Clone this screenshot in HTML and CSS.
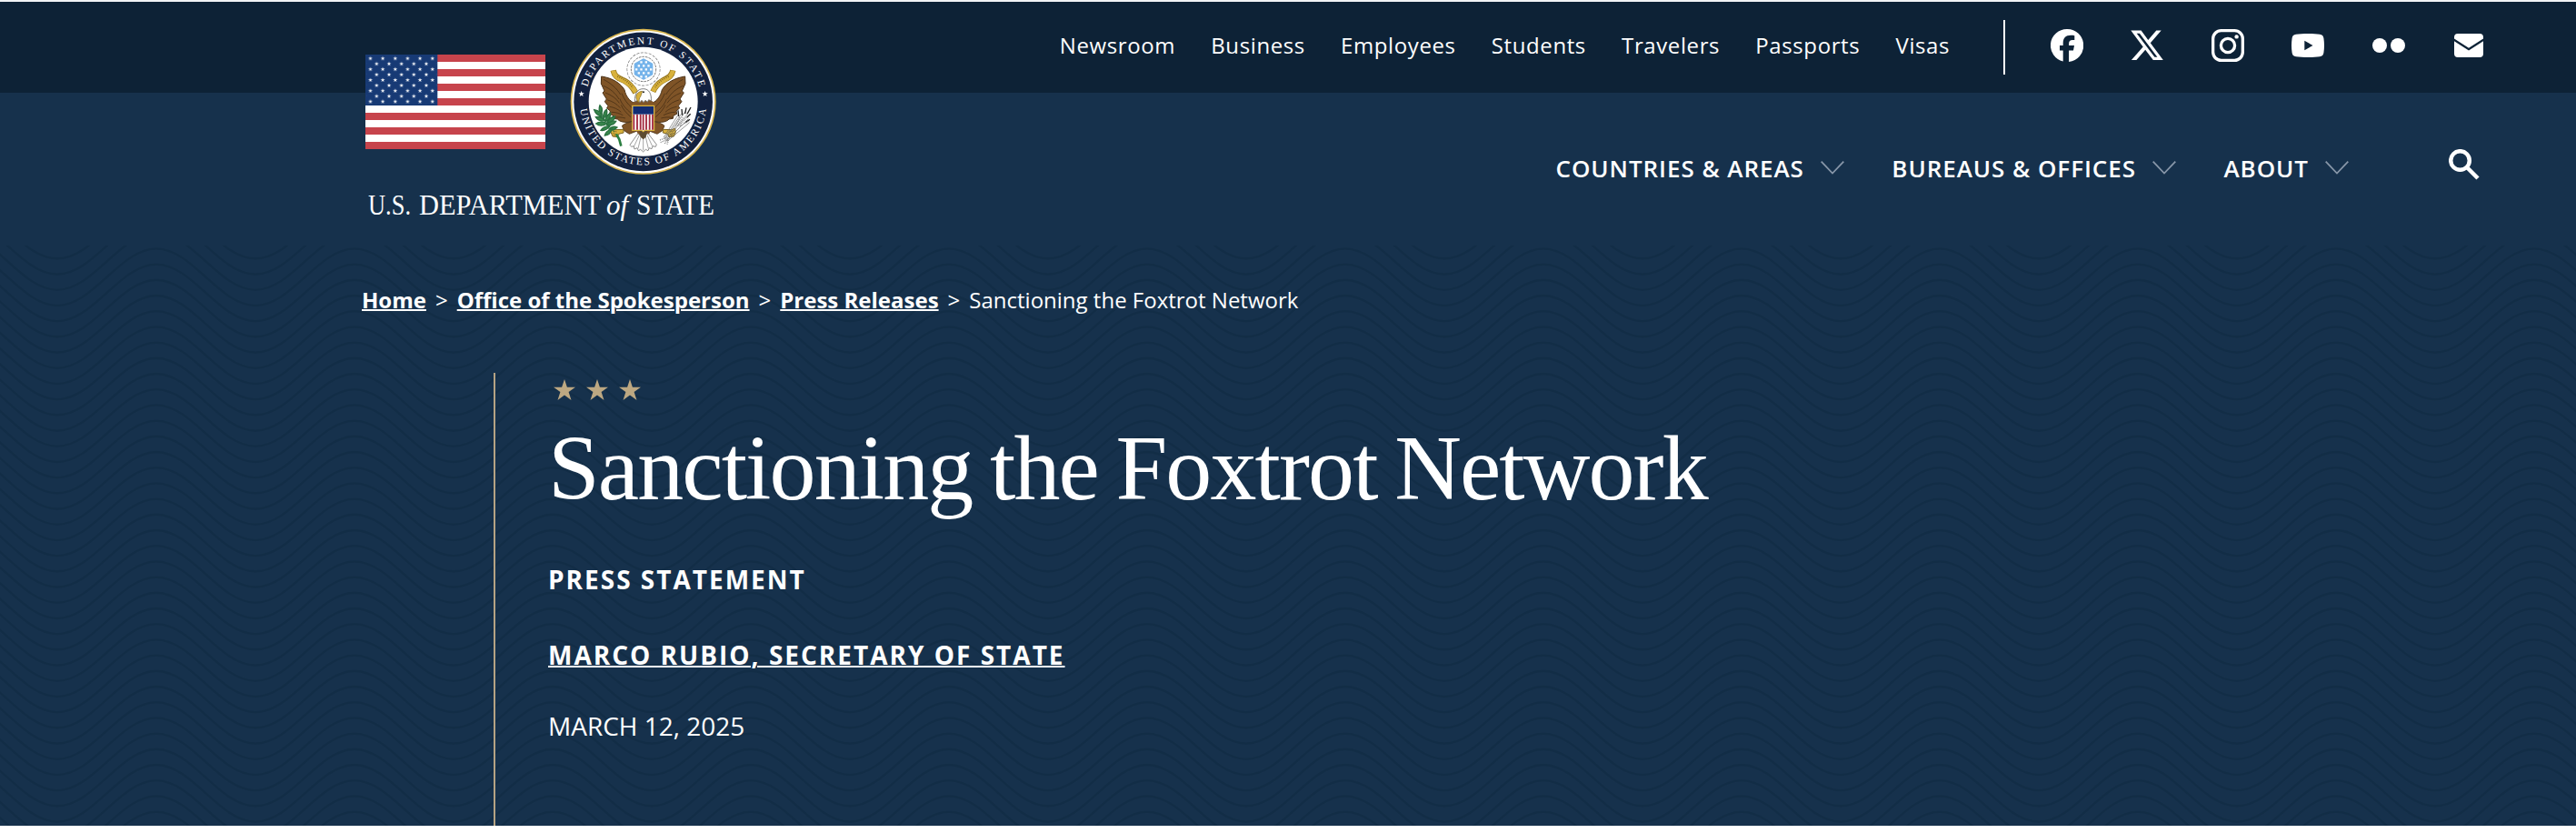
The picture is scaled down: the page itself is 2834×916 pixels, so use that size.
FILE: index.html
```
<!DOCTYPE html>
<html lang="en">
<head>
  <meta charset="UTF-8">
  <meta name="viewport" content="width=device-width, initial-scale=1.0">
  <title>Sanctioning the Foxtrot Network - United States Department of State</title>
  <link rel="stylesheet" href="styles.css">
</head>
<body>
  <header class="site-header">
    <a class="logo" href="#" aria-label="U.S. Department of State">
      <svg width="388" height="216" viewBox="402 30 388 216">
        <defs>
          <path id="star" d="M0-10 2.4-3.1 9.5-3.1 3.8 1.2 5.9 8.1 0 4-5.9 8.1-3.8 1.2-9.5-3.1-2.4-3.1z"/>
          <pattern id="stars" x="400.7" y="58.4" width="13.65" height="11.84" patternUnits="userSpaceOnUse">
            <use href="#star" fill="#fff" transform="translate(6.8 5.9) scale(.25)"/>
            <use href="#star" fill="#fff" transform="translate(0 11.8) scale(.25)"/>
            <use href="#star" fill="#fff" transform="translate(13.65 11.8) scale(.25)"/>
            <use href="#star" fill="#fff" transform="translate(0 0) scale(.25)"/>
            <use href="#star" fill="#fff" transform="translate(13.65 0) scale(.25)"/>
          </pattern>
          <path id="arc-top" d="M793 335.500a190 190 0 0 1 380 0"/>
          <path id="arc-bottom" d="M774 335.500a209 209 0 0 0 418 0"/>
        </defs>

        <!-- flag -->
        <rect x="402" y="60" width="198" height="104" fill="#fff"/>
        <path stroke="#c7444c" stroke-width="8" d="M402 64h198M402 80h198M402 96h198M402 112h198M402 128h198M402 144h198M402 160h198"/>
        <rect x="402" y="60" width="79.300" height="56" fill="#173a75"/>
        <rect x="403" y="61" width="77.300" height="54" fill="url(#stars)"/>

        <!-- seal -->
        <g transform="translate(380 0) scale(.33333)">
          <circle cx="983" cy="335.500" r="240" fill="#d9b650"/>
          <circle cx="983" cy="335.500" r="235" fill="#fff"/>
          <circle cx="983" cy="335.500" r="229" fill="#12213f"/>
          <circle cx="983" cy="335.500" r="180" fill="#fff"/>
          <g class="seal-text">
            <text textLength="500"><textPath href="#arc-top" startOffset="50%" textLength="500">DEPARTMENT OF STATE</textPath></text>
            <text textLength="608"><textPath href="#arc-bottom" startOffset="50%" textLength="608">UNITED STATES OF AMERICA</textPath></text>
          </g>
          <use href="#star" fill="#fff" transform="translate(779 310)"/>
          <use href="#star" fill="#fff" transform="translate(1187 310)"/>

          <!-- glory -->
          <g fill="none" stroke="#777">
            <circle cx="984" cy="228" r="52" stroke-width="7" stroke-dasharray="9 4"/>
            <circle cx="984" cy="228" r="50" stroke="#fff" stroke-width="7"/>
            <circle cx="984" cy="228" r="41" stroke-width="3" stroke-dasharray="8 3"/>
          </g>
          <path fill="#74b3ea" stroke="#74b3ea" stroke-width="8" stroke-linejoin="round" d="M984 197l27 15v32l-27 15-27-15v-32z"/>
          <g fill="none" stroke="#fff" stroke-width="7" stroke-dasharray="7 9">
            <path d="M973 205h30M965 217h45M957 229h60M965 241h45M973 253h30"/>
          </g>

          <!-- ribbon -->
          <path fill="none" stroke="#94751f" stroke-width="19" d="M884 232c4 22 20 26 36 34s26 18 38 40M1081 232c-4 22-20 26-34 34s-24 18-32 36"/>
          <path fill="none" stroke="#d8b13c" stroke-width="15" d="M884 233c4 22 20 26 36 34s26 18 38 37M1081 233c-4 22-20 26-34 34s-24 18-32 34"/>
          <path fill="none" stroke="#8a6d1e" stroke-width="6" stroke-dasharray="3 4" d="M898 252c20 8 40 20 50 38M1067 252c-20 8-36 20-44 36"/>

          <!-- wings and legs -->
          <g id="wing">
            <path fill="#7f5427" stroke="#4a3117" stroke-width="3" d="M845 252c38 6 62 22 76 44 5 22 16 36 32 44l-2 58c-12 6-24 6-36 4-9-2-13-5-17-9l-13-2-2-10-11-5 2-10-11-9 4-8-11-14 6-8-13-21 6-6-11-24z"/>
            <path fill="none" stroke="#3c2711" stroke-width="2" d="M852 262c26 14 44 30 56 50M851 283c24 10 40 24 52 44M858 306c20 8 36 18 46 34M865 330c16 4 30 12 42 26M872 352c14 2 28 8 38 18M878 370c14 0 26 4 38 10M886 388c12-2 24-2 38 2M912 308c8 20 18 34 34 48M906 326c6 18 20 34 38 48M910 346c6 14 18 28 32 40"/>
            <path fill="#7f5427" stroke="#4a3117" stroke-width="2.500" d="M946 402c-14 2-26 6-33 13l7 16 17 11 26-10z"/>
            <path fill="#d8b13c" stroke="#7a6120" stroke-width="3" d="M878 424l12 4 28-1v11l-16 4-4 10-16-2-6-14z"/>
            <path fill="none" stroke="#7a6120" stroke-width="2" d="M882 431l14 4M881 440l14 2M885 447l10-2"/>
          </g>
          <use href="#wing" transform="translate(1966 0) scale(-1 1)"/>

          <!-- head -->
          <path fill="#7f5427" d="M948 338l20-10h34l18 10v14h-72z"/>
          <path fill="#fff" stroke="#666" stroke-width="2.500" d="M955 335c0-26 8-42 28-42s28 18 26 40l-8-4-4 8-7-6-6 7-6-7-6 7-6-7z"/>
          <path fill="#d8b13c" stroke="#7a6120" stroke-width="2" d="M980 301c-14 1-22 10-20 23 2 8 6 11 8 15 3-8 0-15 6-20z"/>
          <circle cx="984" cy="304" r="3" fill="#222"/>

          <!-- tail -->
          <path fill="#7f5427" d="M960 430h48l-10 22h-28z"/>
          <path fill="#fff" stroke="#777" stroke-width="2.500" d="M966 440l-27 38 5 6 8-2 2 10 9-4 4 9 7-4 9 8 8-8 8 4 4-9 8 3 3-9 10 2 3-7-28-37-12 8h-14z"/>
          <path fill="none" stroke="#777" stroke-width="2" d="M970 446l-17 36M976 448l-10 42M983 448v48M990 448l10 42M996 446l17 36"/>
          <path fill="#5c4a30" d="M970 432h26l-4 20-9 8-9-8z"/>

          <!-- shield -->
          <path fill="#fff" stroke="#d8b13c" stroke-width="3.500" d="M947 349h72v81h-31l-5 4-5-4h-31z"/>
          <path stroke="#a32a3f" stroke-width="5.500" d="M952 377v51M963 377v51M974 377v51M983 377v52M993 377v51M1004 377v51M1014 377v51"/>
          <path fill="#122c72" d="M949 351h68v26h-68z"/>

          <!-- olive branch -->
          <path fill="none" stroke="#2b7e41" stroke-width="8" d="M894 442l10 18 6 22"/>
          <path fill="none" stroke="#26653a" stroke-width="3" d="M888 436c-24-22-40-48-49-88"/>
          <path fill="#37864b" stroke="#2a7040" stroke-width="4" d="M840 347c-5 12-2 22 4 29 5-10 3-22-4-29zM821 362c4 12 14 20 26 22-2-12-14-20-26-22zM826 386c6 10 18 14 30 12-6-9-18-14-30-12zM827 408c10 8 24 8 36 0-10-7-26-8-36 0zM843 430c12 2 22-4 30-14-12 0-24 4-30 14zM856 447c10 0 20-8 24-22-12 4-22 12-24 22zM862 361c-10 8-12 18-10 30 10-8 14-18 10-30zM875 373c-12 6-17 16-17 28 12-5 17-16 17-28zM893 400c-13-2-24 2-30 12 12 2 24-2 30-12zM890 384c-12 2-22 10-26 20 14 0 24-8 26-20zM897 420c-10-4-20-2-27 6 10 4 20 2 27-6z"/>

          <!-- arrows -->
          <g fill="none" stroke="#666" stroke-width="2">
            <path d="M1052 458l58-84M1054 460l68-92M1058 462l70-84M1060 464l72-72M1062 466l74-62M1050 454l50-78"/>
            <path stroke="#222" stroke-width="4" d="M1098 364l2 20M1110 360l2 20M1125 355l-4 20M1140 354l-12 22M1139 376l-12 12M1137 394l-14 10"/>
            <path stroke="#888" stroke-width="4" stroke-dasharray="3 3" d="M1104 388l-16 34M1114 388l-20 30M1126 388l-26 28M1132 400l-28 16M1038 462l28-10M1040 470l28-12M1054 474l12-18M1062 476l6-20"/>
          </g>
        </g>

        <!-- wordmark -->
        <g class="wordmark">
          <text x="405" y="235.500" textLength="47" lengthAdjust="spacingAndGlyphs">U.S.</text>
          <text x="461" y="235.500" textLength="200" lengthAdjust="spacingAndGlyphs">DEPARTMENT</text>
          <text class="wordmark-of" x="667" y="235.500" textLength="24">of</text>
          <text x="700" y="235.500" textLength="86" lengthAdjust="spacingAndGlyphs">STATE</text>
        </g>
      </svg>
    </a>

    <div class="topbar">
      <nav class="secondary-nav">
        <a href="#">Newsroom</a>
        <a href="#">Business</a>
        <a href="#">Employees</a>
        <a href="#">Students</a>
        <a href="#">Travelers</a>
        <a href="#">Passports</a>
        <a href="#">Visas</a>
      </nav>
      <div class="social">
        <a href="#" aria-label="Facebook">
          <svg viewBox="0 0 36 36"><path d="M18 0a18 18 0 0 0-4.300 35.500V23.500H10V18h3.700v-2.400c0-6 2.700-8.900 8.700-8.900 1.100 0 3.100.2 3.900.5v4.900c-.4 0-1.200-.1-2.100-.1-2.900 0-4.100 1.100-4.100 4V18h5.900l-1 5.500h-4.900v12.400A18 18 0 0 0 18 0z"/></svg>
        </a>
        <a href="#" aria-label="X">
          <svg viewBox="0 0 36 36"><path d="M28.300 1.600h5.400L21.800 15.200l14 18.800h-11l-8.600-11.200L6.400 34H.9l12.800-14.600L.3 1.600h11.300l7.700 10.300zM26.400 30.700h3L9.900 4.700H6.700z"/></svg>
        </a>
        <a href="#" aria-label="Instagram">
          <svg viewBox="0 0 36 36"><g fill="none" stroke="#fff" stroke-width="3.300"><rect x="1.650" y="1.650" width="32.700" height="32.700" rx="9"/><circle cx="18" cy="18" r="7.600"/></g><circle cx="27.600" cy="8.400" r="2.200"/></svg>
        </a>
        <a href="#" aria-label="YouTube">
          <svg viewBox="0 0 36 36"><path d="M5 5.700C12 4.700 24 4.700 31 5.700c2.700.4 4 1.700 4.400 4.300.8 5 .8 11 0 16-.4 2.600-1.700 3.900-4.400 4.300-7 1-19 1-26 0-2.700-.4-4-1.700-4.400-4.300-.8-5-.8-11 0-16C1 7.400 2.300 6.100 5 5.700zM14.300 12.800v10.400l9.200-5.200z"/></svg>
        </a>
        <a href="#" aria-label="Flickr">
          <svg viewBox="0 0 36 36"><circle cx="8" cy="18" r="8"/><circle cx="28" cy="18" r="8"/></svg>
        </a>
        <a href="#" aria-label="Email">
          <svg viewBox="0 0 36 36"><path d="M6 5h24a4 4 0 0 1 4 4v1.500L18 20.800 2 10.500V9a4 4 0 0 1 4-4zM2 13.300l16 10.200 16-10.200V27a4 4 0 0 1-4 4H6a4 4 0 0 1-4-4z"/></svg>
        </a>
      </div>
    </div>

    <nav class="main-nav">
      <a href="#">COUNTRIES &amp; AREAS</a>
      <svg class="chevron" viewBox="0 0 26 15"><path d="M.7.700 13 13.500 25.300.7"/></svg>
      <a href="#">BUREAUS &amp; OFFICES</a>
      <svg class="chevron" viewBox="0 0 26 15"><path d="M.7.700 13 13.500 25.300.7"/></svg>
      <a href="#">ABOUT</a>
      <svg class="chevron" viewBox="0 0 26 15"><path d="M.7.700 13 13.500 25.300.7"/></svg>
      <svg class="search" viewBox="0 0 34 34"><circle cx="12.500" cy="12.500" r="10.300"/><path d="M20 20l12 12"/></svg>
    </nav>
  </header>

  <main class="hero">
    <div class="breadcrumbs">
      <a href="#">Home</a><span>&gt;</span><a href="#">Office of the Spokesperson</a><span>&gt;</span><a href="#">Press Releases</a><span>&gt;</span>Sanctioning the Foxtrot Network
    </div>
    <div class="featured">
      <svg class="featured-stars" width="96" height="24" viewBox="0 0 96 24">
        <path id="gold-star" d="M12 0l2.900 8.800H24l-7.400 5.300 2.900 9L12 17.600l-7.500 5.500 2.900-9L0 8.800h9.100z"/>
        <use href="#gold-star" x="36"/>
        <use href="#gold-star" x="72"/>
      </svg>
      <h1 class="title">Sanctioning the Foxtrot Network</h1>
      <p class="doctype">PRESS STATEMENT</p>
      <p class="author"><a href="#">MARCO RUBIO, SECRETARY OF STATE</a></p>
      <p class="date">MARCH 12, 2025</p>
    </div>
  </main>
</body>
</html>
```
FILE: styles.css
```
* {
  margin: 0;
  padding: 0;
  box-sizing: border-box;
}

body {
  font-family: 'Open Sans', sans-serif;
  font-size: 24px;
  background: #fff;
  color: #fff;
  overflow: hidden;
}

a {
  color: #fff;
  text-decoration: none;
}

/* header */
.site-header {
  display: grid;
  grid-template-columns: 388px 1fr;
  grid-template-rows: 100px 168px;
  height: 270px;
  padding-left: 402px;
  border-top: 2px solid #f1f3f5;
  background: linear-gradient(#0d2236 100px, #16314c 100px);
}

.logo {
  grid-row: 1 / 3;
  padding-top: 28px;
}

.logo svg {
  display: block;
}

.seal-text {
  font-family: 'Liberation Serif', serif;
  font-size: 34px;
  fill: #fff;
  text-anchor: middle;
}

.wordmark {
  font-family: 'Liberation Serif', serif;
  font-size: 31px;
  fill: #fff;
}

.wordmark-of {
  font-style: italic;
}

.topbar {
  display: flex;
  justify-content: flex-end;
  align-items: center;
  padding-right: 100px;
}

.secondary-nav {
  display: flex;
  gap: 39.2px;
  padding-bottom: 4px;
  letter-spacing: 0.6px;
  line-height: 34px;
}

.social {
  display: flex;
  align-items: center;
  gap: 52.4px;
  height: 60px;
  margin-left: 59px;
  padding: 0 0 4px 50px;
  border-left: 2px solid #fff;
}

.social svg {
  display: block;
  width: 36px;
  height: 36px;
  fill: #fff;
}

.main-nav {
  display: flex;
  justify-content: flex-end;
  align-items: flex-start;
  padding: 65px 106px 0 0;
  font-size: 26px;
  font-weight: 600;
  letter-spacing: 0.95px;
  line-height: 36px;
}

.chevron {
  width: 26px;
  height: 15px;
  margin: 10px 52.500px 0 18px;
  fill: none;
  stroke: #8796a8;
  stroke-width: 1.8;
}

.search {
  width: 34px;
  height: 34px;
  margin: -3px 0 0 57.500px;
  fill: none;
  stroke: #fff;
  stroke-width: 4.5;
}

/* hero with wave pattern */
.hero {
  height: 638px;
  padding: 43px 0 0 398px;
  background-color: #16314c;
  background-image: url("data:image/svg+xml,%3Csvg xmlns='http://www.w3.org/2000/svg' xmlns:xlink='http://www.w3.org/1999/xlink' width='218' height='86' viewBox='0 0 218 86'%3E%3Cdefs%3E%3Cpath id='w' d='M-46 0c40 0 69 62.5 109 62.5s69-62.5 109-62.5 69 62.5 109 62.5'/%3E%3C/defs%3E%3Cg fill='none' stroke='%230f2a43' stroke-opacity='.6' stroke-width='2.6'%3E%3Cuse xlink:href='%23w' y='-65.3'/%3E%3Cuse xlink:href='%23w' y='-48.1'/%3E%3Cuse xlink:href='%23w' y='-30.9'/%3E%3Cuse xlink:href='%23w' y='-13.7'/%3E%3Cuse xlink:href='%23w' y='3.5'/%3E%3Cuse xlink:href='%23w' y='20.7'/%3E%3Cuse xlink:href='%23w' y='37.9'/%3E%3Cuse xlink:href='%23w' y='55.1'/%3E%3Cuse xlink:href='%23w' y='72.3'/%3E%3C/g%3E%3C/svg%3E");
  background-size: 218px 86px;
}

.breadcrumbs {
  height: 97px;
  line-height: 34px;
}

.breadcrumbs a {
  font-weight: 700;
  text-decoration: underline;
  text-decoration-thickness: 2px;
}

.breadcrumbs span {
  margin: 0 10px;
}

.featured {
  height: 498px;
  margin-left: 145px;
  padding: 7px 0 0 58px;
  border-left: 2px solid #b5a384;
}

.featured-stars {
  display: block;
  margin-left: 6px;
  fill: #bda882;
}

.title {
  margin-top: 14px;
  font-family: 'Liberation Serif', serif;
  font-size: 102px;
  font-weight: 400;
  letter-spacing: -1.9px;
  word-spacing: -4px;
  line-height: 120px;
}

.doctype,
.author {
  font-size: 28px;
  font-weight: 700;
  letter-spacing: 2px;
  line-height: 40px;
}

.doctype {
  margin-top: 42px;
}

.author {
  margin-top: 43px;
}

.author a {
  text-decoration: underline;
  text-decoration-thickness: 2px;
}

.date {
  margin-top: 38px;
  font-size: 28px;
  line-height: 40px;
}
```
